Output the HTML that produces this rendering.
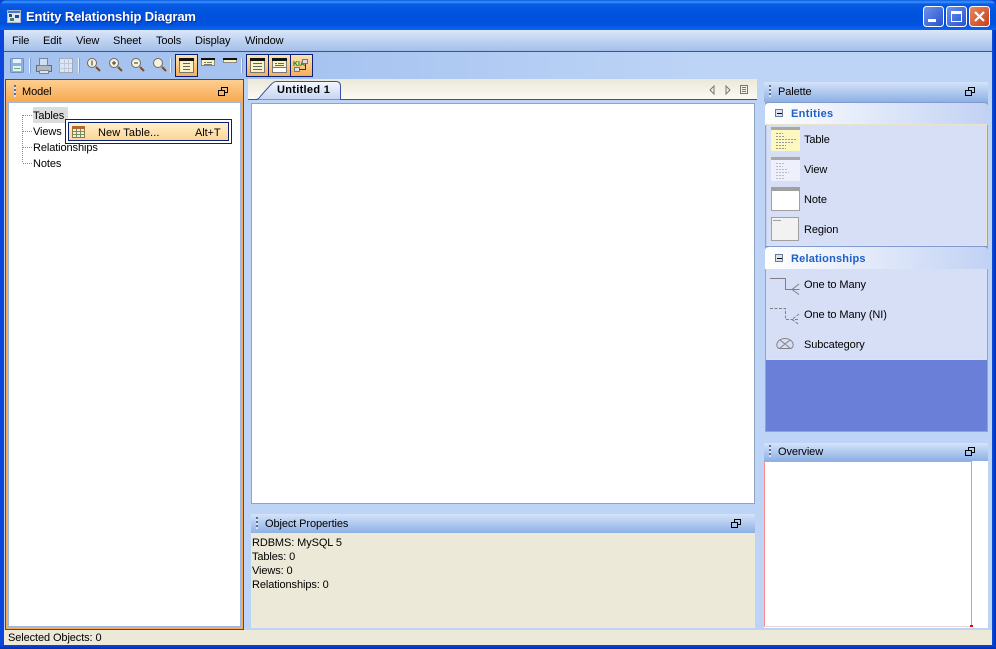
<!DOCTYPE html>
<html><head><meta charset="utf-8"><style>
html,body{margin:0;padding:0;width:996px;height:649px;overflow:hidden;background:#0a3fd0}
*{box-sizing:border-box}
body{font:11px "Liberation Sans",sans-serif;color:#000;position:relative}
.a,.t{position:absolute}
.t{white-space:nowrap;line-height:13px;letter-spacing:-.1px;margin-top:1px}
.hdr{position:absolute;background:linear-gradient(#d4e3f9,#8db0e5)}
.grip{position:absolute;width:2px;height:12px;background:repeating-linear-gradient(#5a6f96 0 2px,#d8e4f8 2px 4px)}
.bt{position:absolute;width:23px;height:23px;background:linear-gradient(#fde2b0,#f8ae58);border:1px solid #0a1f78}
svg{position:absolute;left:0;top:0}
</style></head><body>
<!-- title -->
<div class="a" style="left:0;top:0;width:996px;height:30px;border-radius:7px 7px 0 0;background:linear-gradient(#0a5ce0 0,#3a93ff 2px,#0a5ce6 4px,#0054de 12px,#0050dc 24px,#0a62ee 29px)"></div>
<div class="a" style="left:0;top:30px;width:996px;height:619px;background:#0a45dc"></div>
<div class="a" style="left:992px;top:30px;width:4px;height:619px;background:linear-gradient(90deg,#0a4fe0,#002fb0)"></div>
<div class="a" style="left:0;top:645px;width:996px;height:4px;background:linear-gradient(#0a45dc,#0030b0)"></div>
<div class="t" style="left:26px;top:9px;margin:0;font:bold 13px/16px 'Liberation Sans',sans-serif;color:#fff;text-shadow:1px 1px 0 #0a2f9a;letter-spacing:-.13px">Entity Relationship Diagram</div>
<svg width="996" height="649" style="z-index:5">
<rect x="7.500" y="10.500" width="13" height="12" fill="#dfe6f2" stroke="#aab8d0"/><rect x="8" y="11" width="12" height="2" fill="#4a76c8"/><rect x="9" y="14" width="3" height="3" fill="#1f4f90"/><rect x="15" y="15" width="4" height="3" fill="#1f4f90"/><rect x="10" y="18" width="4" height="3" fill="#3f8060"/>
<!-- caption buttons -->
<defs><linearGradient id="cb" x1="0" y1="0" x2="1" y2="1"><stop offset="0" stop-color="#6f94ec"/><stop offset="1" stop-color="#2450d0"/></linearGradient><linearGradient id="cr" x1="0" y1="0" x2="1" y2="1"><stop offset="0" stop-color="#e88a60"/><stop offset="1" stop-color="#c83c18"/></linearGradient></defs>
<rect x="923.500" y="6.500" width="20" height="20" rx="3" fill="url(#cb)" stroke="#fff"/><rect x="928" y="19" width="8" height="3" fill="#fff"/>
<rect x="946.500" y="6.500" width="20" height="20" rx="3" fill="url(#cb)" stroke="#fff"/><rect x="951.500" y="11.500" width="10" height="10" fill="none" stroke="#fff"/><rect x="951" y="11" width="11" height="3" fill="#fff"/>
<rect x="969.500" y="6.500" width="20" height="20" rx="3" fill="url(#cr)" stroke="#fff"/><path d="M975 12l9 9M984 12l-9 9" stroke="#fff" stroke-width="2.200"/>
</svg>
<!-- client -->
<div class="a" style="left:4px;top:30px;width:988px;height:600px;background:#bdd4f6"></div>
<div class="a" style="left:4px;top:30px;width:988px;height:21px;background:linear-gradient(#dbe7f9,#a3bfe9)"></div>
<div class="a" style="left:4px;top:51px;width:988px;height:1px;background:#3c4fa8"></div>
<div class="a" style="left:4px;top:52px;width:988px;height:27px;background:linear-gradient(90deg,#a6c3f0 0,#a6c3f0 300px,#bdd4f6 700px)"></div>
<div class="t" style="left:12px;top:34px">File</div><div class="t" style="left:43px;top:34px">Edit</div><div class="t" style="left:76px;top:34px">View</div><div class="t" style="left:113px;top:34px">Sheet</div><div class="t" style="left:156px;top:34px">Tools</div><div class="t" style="left:195px;top:34px">Display</div><div class="t" style="left:245px;top:34px">Window</div>
<!-- toolbar -->
<div class="bt" style="left:175px;top:54px"></div><div class="bt" style="left:246px;top:54px"></div><div class="bt" style="left:268px;top:54px"></div><div class="bt" style="left:290px;top:54px"></div>
<svg width="996" height="649" style="z-index:2">
<rect x="10.500" y="58.500" width="13" height="14" rx="1" fill="#8fb0e4" stroke="#6f8fc8"/><rect x="13" y="59" width="8" height="4" fill="#e8f0fb"/><rect x="13" y="66" width="8" height="5" fill="#e8f4e8"/><path d="M14 68.500h6" stroke="#60b070"/>
<path d="M29.500 58v15M170.500 58v15M78.500 58v15M241.500 58v15" stroke="#e8f0fc"/><path d="M30.500 58v15M79.500 58v15M171.500 58v15M242.500 58v15" stroke="#7f9ed8"/>
<rect x="36.500" y="65.500" width="15" height="6" fill="#b4b8c2" stroke="#666c78"/><rect x="39.500" y="58.500" width="8" height="7" fill="#cfe0f4" stroke="#7a8494"/><rect x="39.500" y="70.500" width="9" height="3" fill="#dfe4ea" stroke="#7a8494"/>
<rect x="59.500" y="58.500" width="13" height="14" fill="#dbe6f8" stroke="#a0a8b8"/><path d="M59 63.500h13M59 68.500h13M64.500 58v14M68.500 58v14" stroke="#c0c8d8"/>
<g fill="#f6f2de" stroke="#6c6a60"><circle cx="92" cy="63" r="4.500"/><circle cx="114" cy="63" r="4.500"/><circle cx="136" cy="63" r="4.500"/><circle cx="158" cy="63" r="4.500"/></g>
<path d="M96 67l4 4M118 67l4 4M140 67l4 4M162 67l4 4" stroke="#7a4e2a" stroke-width="2"/>
<path d="M92 60.500v5M112 63h4M114 61v4M134 63h4" stroke="#333" fill="none"/>
<!-- view icons -->
<rect x="179.500" y="58.500" width="14" height="14" fill="#fbf2c4" stroke="#777"/><rect x="179" y="58" width="15" height="3" fill="#111"/><path d="M183 63.500h7M183 66.500h7M183 69.500h7" stroke="#666"/>
<rect x="201.500" y="58.500" width="13" height="7" fill="#fbf2c4" stroke="#888"/><rect x="201" y="58" width="14" height="2" fill="#111"/><path d="M204 62.500h2M207 62.500h5M204 64.500h8" stroke="#777"/>
<rect x="223.500" y="58.500" width="13" height="4" fill="#fbf2c4" stroke="#888"/><rect x="223" y="58" width="14" height="2" fill="#111"/>
<rect x="250.500" y="58.500" width="14" height="14" fill="#fbf2c4" stroke="#777"/><rect x="250" y="58" width="15" height="3" fill="#111"/><path d="M253 63.500h9M253 66.500h9M253 69.500h9" stroke="#666"/>
<rect x="272.500" y="58.500" width="14" height="14" fill="#fbf2c4" stroke="#777"/><rect x="272" y="58" width="15" height="3" fill="#111"/><path d="M275 63.500h2M278 63.500h6M275 65.500h9" stroke="#666"/><rect x="273" y="68" width="13" height="4" fill="#fff"/><path d="M272 67.500h15" stroke="#777"/>
<text x="293" y="66" font-family="Liberation Sans" font-size="7" font-weight="bold" fill="#138a2c">KIA</text>
<rect x="302.500" y="59.500" width="5" height="4" fill="#dde" stroke="#777"/><rect x="294.500" y="67.500" width="5" height="4" fill="#dde" stroke="#777"/><path d="M305.500 64v5.500h-6" stroke="#333" fill="none"/>
</svg>
<!-- Model panel -->
<div class="a" style="left:5px;top:79px;width:239px;height:551px;border:1px solid #2f47b0;background:#f9a95a"></div>
<div class="a" style="left:6px;top:80px;width:237px;height:22px;background:linear-gradient(#fdcf90,#f8a850)"></div>
<div class="a" style="left:8px;top:102px;width:233px;height:525px;background:#fff;border:1px solid #9db8de"></div>
<div class="grip" style="left:14px;top:85px"></div>
<div class="t" style="left:22px;top:85px">Model</div>
<svg width="996" height="649" style="z-index:1">
<g fill="none" stroke="#000"><rect x="218.500" y="90.500" width="6" height="5"/><path d="M221.500 90v-2.500h6v5h-2.500"/>
<rect x="965.500" y="90.500" width="6" height="5"/><path d="M968.500 90v-2.500h6v5h-2.500"/>
<rect x="731.500" y="522.500" width="6" height="5"/><path d="M734.500 522v-2.500h6v5h-2.500"/>
<rect x="965.500" y="450.500" width="6" height="5"/><path d="M968.500 450v-2.500h6v5h-2.500"/></g>
</svg>
<div class="a" style="left:33px;top:107px;width:35px;height:16px;background:#dcdcdc"></div>
<div class="t" style="left:33px;top:109px">Tables</div>
<div class="t" style="left:33px;top:125px">Views</div>
<div class="t" style="left:33px;top:141px">Relationships</div>
<div class="t" style="left:33px;top:157px">Notes</div>
<svg width="996" height="649" style="z-index:1"><path d="M22.500 115v48M23 115.500h10M23 131.500h10M23 147.500h10M23 163.500h10" stroke="#888" stroke-dasharray="1 1" fill="none"/></svg>
<!-- popup -->
<div class="a" style="left:65px;top:119px;width:167px;height:25px;background:#fff;border:1px solid #0a1f78;z-index:3;padding:2px"><div style="width:100%;height:100%;border:1px solid #0a1f78;background:linear-gradient(#fff0c8,#fcd596)"></div></div>
<div class="t" style="left:98px;top:126px;z-index:4;letter-spacing:.1px">New Table...</div><div class="t" style="left:195px;top:126px;z-index:4">Alt+T</div>
<svg width="996" height="649" style="z-index:4"><rect x="72.500" y="126.500" width="12" height="11" fill="#f4f0d8" stroke="#8a7a50"/><rect x="72" y="126" width="13" height="3" fill="#b06a30"/><path d="M76.500 129v8M80.500 129v8M73 131.500h11M73 134.500h11" stroke="#7a8a60"/></svg>
<!-- tabs -->
<div class="a" style="left:248px;top:79px;width:509px;height:20px;background:linear-gradient(#ebe8d8,#fbfaf4)"></div>
<div class="a" style="left:248px;top:99px;width:509px;height:1px;background:#3c4fa8"></div>
<svg width="996" height="649" style="z-index:1">
<defs><linearGradient id="tb" x1="0" y1="0" x2="0" y2="1"><stop offset="0" stop-color="#f4f7fd"/><stop offset="1" stop-color="#c4d5f4"/></linearGradient></defs>
<path d="M255 99.500c3 0 4-1 6-4l10-11c2-2 3-3 6-3h59c3 0 4.500 2 4.500 5v13z" fill="url(#tb)"/>
<path d="M255 99.500c3 0 4-1 6-4l10-11c2-2 3-3 6-3h59c3 0 4.500 2 4.500 5v13" fill="none" stroke="#3c4fa8"/>
<path d="M714 86l-4 4 4 4zM726 86l4 4-4 4z" fill="none" stroke="#777"/><rect x="740.500" y="85.500" width="7" height="8" fill="none" stroke="#777"/><path d="M742 87.500h4M742 89.500h4M742 91.500h4" stroke="#777"/>
</svg>
<div class="t" style="left:277px;top:83px;font-weight:bold;z-index:2;letter-spacing:.3px">Untitled 1</div>
<div class="a" style="left:251px;top:103px;width:504px;height:401px;background:#fff;border:1px solid #8fa5bf"></div>
<!-- object props -->
<div class="hdr" style="left:251px;top:514px;width:504px;height:19px"></div>
<div class="a" style="left:251px;top:533px;width:504px;height:95px;background:#ece9d8"></div>
<div class="grip" style="left:256px;top:517px"></div>
<div class="t" style="left:265px;top:517px">Object Properties</div>
<div class="t" style="left:252px;top:536px">RDBMS: MySQL 5</div><div class="t" style="left:252px;top:550px">Tables: 0</div><div class="t" style="left:252px;top:564px">Views: 0</div><div class="t" style="left:252px;top:578px">Relationships: 0</div>
<!-- palette -->
<div class="hdr" style="left:764px;top:82px;width:224px;height:20px"></div>
<div class="grip" style="left:769px;top:85px"></div>
<div class="t" style="left:778px;top:85px">Palette</div>
<div class="a" style="left:765px;top:102px;width:223px;height:330px;background:#6a80d8;border:1px solid #8fa5cf"></div>
<div class="a" style="left:765px;top:102px;width:223px;height:23px;background:linear-gradient(90deg,#fff,#c2d2f4);border-radius:4px 4px 0 0;border-top:1px solid #7f9bd0"></div>
<div class="a" style="left:766px;top:124px;width:221px;height:122px;background:#d6dff6;border:1px solid #e8e4cc;border-left-color:#c4cfe8"></div>
<div class="a" style="left:765px;top:246px;width:223px;height:23px;background:linear-gradient(90deg,#fff,#c2d2f4);border-radius:4px 4px 0 0;border-top:1px solid #7f9bd0"></div>
<div class="a" style="left:766px;top:269px;width:221px;height:91px;background:#d6dff6;border-bottom:1px solid #e8e4cc"></div>
<div class="t" style="left:791px;top:107px;font-weight:bold;color:#1f5fc8;letter-spacing:.35px">Entities</div>
<div class="t" style="left:791px;top:252px;font-weight:bold;color:#1f5fc8;letter-spacing:.2px">Relationships</div>
<div class="t" style="left:804px;top:133px">Table</div><div class="t" style="left:804px;top:163px">View</div><div class="t" style="left:804px;top:193px">Note</div><div class="t" style="left:804px;top:223px">Region</div>
<div class="t" style="left:804px;top:278px">One to Many</div><div class="t" style="left:804px;top:308px">One to Many (NI)</div><div class="t" style="left:804px;top:338px">Subcategory</div>
<svg width="996" height="649" style="z-index:2">
<g fill="#dfe3ee" stroke="#6a7a98"><rect x="775.500" y="109.500" width="7" height="7"/><rect x="775.500" y="254.500" width="7" height="7"/></g><path d="M777 113.500h5M777 258.500h5" stroke="#000"/>
<rect x="771" y="127" width="29" height="24" fill="#fdf8c0"/><rect x="771" y="127" width="29" height="3" fill="#a8a8a8"/><path d="M776 133.500h7M776 136.500h9M776 139.500h20M776 142.500h18M776 145.500h10M776 148.500h10" stroke="#999" stroke-dasharray="2 1"/>
<rect x="771" y="157" width="29" height="24" fill="#eef0fb"/><rect x="771" y="157" width="29" height="3" fill="#a8a8a8"/><path d="M776 163.500h9M776 166.500h7M776 169.500h11M776 172.500h13M776 175.500h9M776 178.500h9" stroke="#bbc" stroke-dasharray="2 1"/>
<rect x="771.500" y="187.500" width="28" height="23" fill="#fff" stroke="#a0a0a0"/><rect x="771" y="187" width="29" height="4" fill="#a0a0a0"/>
<rect x="771.500" y="217.500" width="27" height="23" fill="#f2f2f2" stroke="#a0a0a0"/><path d="M773 220.500h8" stroke="#a0a0a0"/>
<path d="M770 278.500h15.500v11h14M799 284l-7 5.500 7 5" fill="none" stroke="#808080"/>
<path d="M770 308.500h15.500v11h14M799 314l-7 5.500 7 5" fill="none" stroke="#808080" stroke-dasharray="3 1.500"/>
<path d="M779 348.500c-2-1-2.500-3-2-5 1-3 4-5 8-5s7 2 8 5c.5 2-.0 4-2 5zM780 340l10 8M790 340l-10 8" fill="none" stroke="#808080"/>
</svg>
<!-- overview -->
<div class="hdr" style="left:764px;top:443px;width:224px;height:18px"></div>
<div class="grip" style="left:769px;top:445px"></div>
<div class="t" style="left:778px;top:445px">Overview</div>
<div class="a" style="left:764px;top:461px;width:224px;height:167px;background:#fff"></div>
<div class="a" style="left:764px;top:461px;width:208px;height:166px;border:1px solid #ff8a8a;border-bottom:1px solid #e8d8d8"></div>
<div class="a" style="left:970px;top:625px;width:3px;height:2px;background:#f00"></div>
<!-- status -->
<div class="a" style="left:4px;top:630px;width:988px;height:15px;background:#ece9d8"></div>
<div class="t" style="left:8px;top:631px">Selected Objects: 0</div>
</body></html>
